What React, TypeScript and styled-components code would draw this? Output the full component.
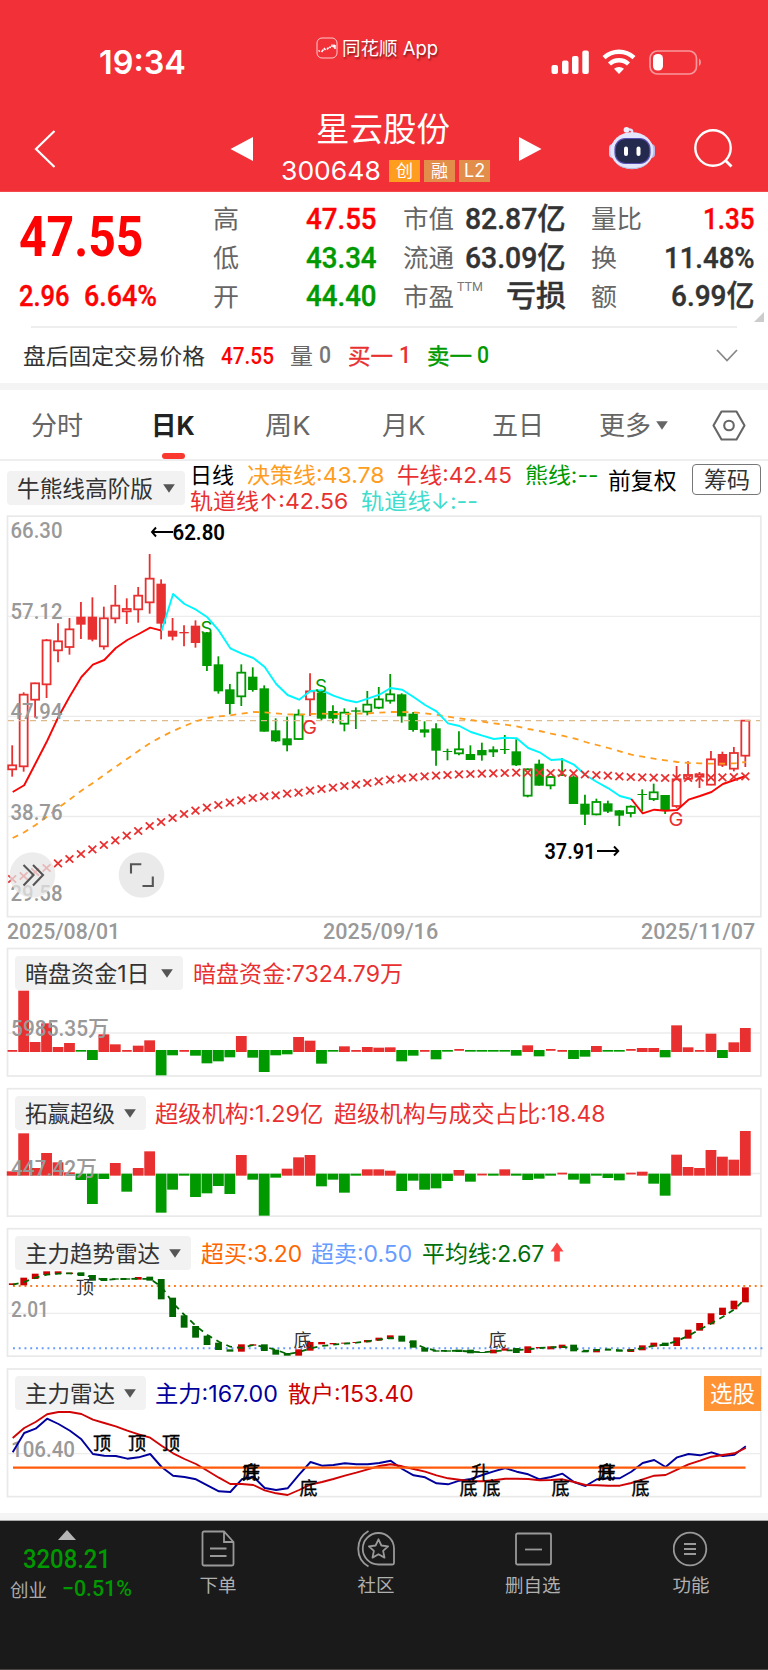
import React, { useLayoutEffect, useRef } from 'react';
import styled, { createGlobalStyle, css } from 'styled-components';

const RED = '#e93030';
const GREEN = '#009900';
const CJK = '"Noto Sans CJK SC", sans-serif';

const GlobalStyle = createGlobalStyle`
  body { margin: 0; background: #fff; }
  * { box-sizing: border-box; }
  svg { display: block; flex: none; }
`;

const Page = styled.div`
  width: 768px;
  height: 1670px;
  overflow: hidden;
  display: flex;
  flex-direction: column;
  background: #fff;
  font-family: Inter, ${CJK};
`;

/* ---------- text ---------- */

type LabelProps = {
  $w: number; $size: number; $color?: string; $weight?: number; $num?: boolean; $ml?: number; $mt?: number; $shadow?: boolean; $strong?: boolean;
};
const LabelBox = styled.span<LabelProps>`
  display: block;
  flex: none;
  width: ${p => p.$w}px;
  height: ${p => Math.round(p.$size * 1.2)}px;
  line-height: ${p => Math.round(p.$size * 1.2)}px;
  margin-left: ${p => p.$ml || 0}px;
  margin-top: ${p => p.$mt || 0}px;
  font-size: ${p => p.$size}px;
  font-weight: ${p => p.$weight || 400};
  color: ${p => p.$color || '#333'};
  font-family: ${p => (p.$num ? 'Roboto' : 'Inter')}, ${CJK};
  white-space: nowrap;
  ${p => p.$strong && css`-webkit-text-stroke: 0.4px currentColor;`}
  ${p => p.$shadow && css`text-shadow: 1px 2px 2px rgba(0, 0, 0, 0.45);`}
`;
const LabelInner = styled.span`
  display: inline-block;
  transform-origin: 0 50%;
  white-space: pre;
`;

type TextProps = {
  w: number; size: number; color?: string; weight?: number; num?: boolean; ml?: number; mt?: number; shadow?: boolean; strong?: boolean;
  children: React.ReactNode;
};

/* Text condensed or widened to a fixed advance width. */
function Text({ w, size, color, weight, num, ml, mt, shadow, strong, children }: TextProps) {
  const ref = useRef<HTMLSpanElement>(null);
  useLayoutEffect(() => {
    const el = ref.current;
    if (el && el.offsetWidth) el.style.transform = `scaleX(${w / el.offsetWidth})`;
  }, [w, children]);
  return (
    <LabelBox $w={w} $size={size} $color={color} $weight={weight} $num={num} $ml={ml} $mt={mt} $shadow={shadow} $strong={strong}>
      <LabelInner ref={ref}>{children}</LabelInner>
    </LabelBox>
  );
}

/* ---------- header ---------- */

const Header = styled.header`
  height: 192px;
  flex: none;
  background: #f23038;
  border-bottom: 1px solid #f4474e;
`;
const StatusBar = styled.div`
  height: 96px;
  display: flex;
  align-items: flex-start;
  padding-left: 99px;
`;
const AppTag = styled.div`
  display: flex;
  align-items: center;
  gap: 4px;
  margin: 37px 0 0 130px;
`;
const StatusIcons = styled.div`
  display: flex;
  align-items: center;
  margin: 48px 0 0 112px;
`;
const TitleBar = styled.div`
  height: 95px;
  display: flex;
  align-items: flex-start;
`;
const TitleBlock = styled.div`
  width: 210px;
  margin-left: 27px;
  display: flex;
  flex-direction: column;
`;
const CodeRow = styled.div`
  display: flex;
  align-items: center;
  margin-top: 6px;
`;
const Badges = styled.div`
  display: flex;
  gap: 4px;
  margin-left: 8px;
`;
const Badge = styled.span<{ $bg: string }>`
  width: 31px;
  height: 22px;
  background: ${p => p.$bg};
  display: flex;
  align-items: center;
  justify-content: center;
`;
const IconSlot = styled.div<{ $ml: number; $mt: number }>`
  flex: none;
  margin: ${p => p.$mt}px 0 0 ${p => p.$ml}px;
`;

/* ---------- quote ---------- */

const Quote = styled.section`
  height: 134px;
  flex: none;
  display: grid;
  grid-template-columns: 213px 190px 188px 177px;
  position: relative;
`;
const PriceCol = styled.div`
  padding: 15px 0 0 19px;
`;
const ChangeRow = styled.div`
  display: flex;
  margin-top: 8px;
`;
const StatCol = styled.div<{ $pr: number }>`
  display: grid;
  grid-template-rows: 39px 39px 38px;
  padding: 7px ${p => p.$pr}px 0 0;
`;
const StatRow = styled.div`
  display: flex;
  align-items: center;
`;
const Spacer = styled.div`
  flex: 1;
`;
const Corner = styled.svg`
  position: absolute;
  right: 4px;
  bottom: 4px;
`;
const Divider = styled.div`
  height: 2px;
  flex: none;
  margin: 0 31px;
  background: #eee;
`;
const AfterHours = styled.section`
  height: 55px;
  flex: none;
  display: flex;
  align-items: center;
  padding-left: 23px;
  padding-top: 1px;
`;
const Band = styled.div<{ $h: number }>`
  height: ${p => p.$h}px;
  flex: none;
  background: #f4f4f4;
`;

/* ---------- tabs ---------- */

const Tabs = styled.nav`
  height: 71px;
  flex: none;
  display: flex;
  border-bottom: 2px solid #eee;
  padding-left: 31px;
`;
const Tab = styled.div<{ $ml?: number }>`
  margin-left: ${p => p.$ml || 0}px;
  display: flex;
  flex-direction: column;
  align-items: center;
  padding-top: 20px;
`;
const Marker = styled.div`
  width: 23px;
  height: 6px;
  border-radius: 3px;
  background: #fb382f;
  margin-top: 12px;
`;
const MoreRow = styled.div`
  display: flex;
  align-items: center;
  gap: 5px;
`;

const IndicatorBar = styled.section`
  height: 52px;
  flex: none;
  display: flex;
  padding-left: 7px;
`;
const Pill = styled.div<{ $w: number; $mt?: number }>`
  width: ${p => p.$w}px;
  height: 34px;
  margin-top: ${p => p.$mt || 0}px;
  flex: none;
  border-radius: 4px;
  background: #f2f2f2;
  display: flex;
  align-items: center;
  justify-content: space-between;
  padding: 0 10px 0 10px;
`;
const Legends = styled.div`
  width: 418px;
  padding-top: 1px;
`;
const LegendRow = styled.div`
  display: flex;
`;
const Outlined = styled.div`
  width: 69px;
  height: 31px;
  margin: 3px 0 0 15px;
  border: 1.5px solid #777;
  border-radius: 4px;
  display: flex;
  align-items: center;
  justify-content: center;
`;
const AxisRow = styled.div`
  height: 27px;
  flex: none;
  display: flex;
  justify-content: space-between;
  padding: 0 13px 0 7px;
`;

/* ---------- sub charts ---------- */

const Panel = styled.section`
  height: 140px;
  flex: none;
  display: grid;
  & > * { grid-area: 1 / 1; }
`;
const PanelHead = styled.div`
  display: flex;
  align-items: center;
  height: 34px;
  margin: 10px 7px 0 15px;
  z-index: 1;
`;
const PickBtn = styled.div`
  width: 57px;
  height: 35px;
  background: #ff9232;
  display: flex;
  align-items: center;
  justify-content: center;
`;

/* ---------- bottom nav ---------- */

const BottomGap = styled.div`
  height: 7px;
  flex: none;
`;
const BottomBar = styled.footer`
  height: 150px;
  flex: none;
  background: #1a1a1a;
  border-top: 1px solid #a9abab;
  border-bottom: 1px solid #4b4545;
  display: flex;
`;
const IndexBox = styled.div`
  width: 140px;
  padding-top: 9px;
`;
const IndexRow = styled.div`
  display: flex;
  align-items: center;
  padding-left: 10px;
`;
const NavItem = styled.div<{ $ml: number }>`
  width: 60px;
  margin-left: ${p => p.$ml}px;
  padding-top: 8px;
  display: flex;
  flex-direction: column;
  align-items: center;
`;

const Caret = ({ color = '#555' }: { color?: string }) => (
  <svg width={12} height={9} viewBox="0 0 12 9"><path d="M0.2 0.3H11.8L6 8.8Z" fill={color} /></svg>
);

/* ---------- chart data ---------- */

const X0 = 12.2;
const STEP = 11.455;
const cx = (i: number) => X0 + STEP * i;

/* h: hollow red, r: solid red, g: solid green, e: hollow green */
type Kind = 'h' | 'r' | 'g' | 'e';
type Candle = [Kind, number, number, number, number];
const third = (base: number, rows: Candle[]): Candle[] =>
  rows.map(([k, a, b, c, d]) => [k, base + a / 3, base + b / 3, base + c / 3, base + d / 3]);
const seg = (base: number, ys: number[]) => ys.map(v => base + v / 3);

const candles: Candle[] = [
  ...third(510, [
    ['h', 706, 766, 778, 800], ['h', 547, 554, 769, 785], ['h', 518, 520, 569, 623], ['h', 387, 391, 523, 564],
    ['h', 340, 394, 421, 457], ['h', 324, 358, 411, 434], ['r', 276, 320, 344, 387], ['r', 262, 320, 389, 394],
    ['h', 290, 325, 409, 419], ['h', 225, 287, 325, 340], ['h', 265, 297, 304, 342], ['h', 231, 257, 298, 338],
    ['h', 132, 206, 277, 311], ['r', 208, 221, 341, 388], ['r', 324, 362, 380, 391], ['r', 346, 366, 370, 409],
    ['r', 331, 347, 399, 413], ['g', 366, 367, 468, 483], ['g', 439, 463, 544, 551], ['g', 522, 538, 582, 613],
    ['e', 463, 488, 559, 588], ['g', 472, 500, 540, 545],
  ]),
  ...third(560, [
    ['g', 376, 385, 515, 515], ['g', 475, 511, 544, 546], ['g', 470, 535, 556, 574], ['e', 448, 464, 537, 540],
    ['h', 340, 394, 418, 468], ['g', 390, 398, 476, 481], ['g', 436, 453, 476, 490], ['e', 445, 458, 491, 514],
    ['g', 442, 451, 455, 507], ['e', 393, 434, 455, 466], ['e', 381, 418, 443, 447], ['e', 342, 403, 422, 431],
    ['g', 400, 403, 469, 488], ['g', 456, 461, 510, 515], ['g', 484, 508, 518, 532], ['g', 490, 505, 572, 617],
    ['g', 566, 573, 576, 601], ['e', 514, 568, 580, 586], ['g', 556, 582, 600, 600],
  ]),
  ...third(660, [
    ['g', 248, 270, 286, 302], ['g', 259, 268, 277, 291], ['g', 225, 267, 270, 282], ['g', 238, 274, 316, 318],
    ['e', 325, 328, 407, 412], ['g', 299, 311, 377, 377], ['e', 348, 351, 376, 388], ['g', 294, 344, 347, 348],
    ['g', 346, 350, 432, 432], ['g', 404, 431, 464, 495], ['e', 416, 426, 463, 466], ['g', 422, 430, 455, 459],
    ['g', 450, 451, 467, 498], ['e', 436, 440, 459, 472], ['g', 388, 402, 405, 454], ['e', 371, 397, 417, 423],
    ['g', 405, 405, 451, 462], ['h', 318, 358, 438, 445], ['h', 304, 345, 356, 360], ['h', 336, 343, 350, 384],
    ['h', 273, 298, 374, 376], ['r', 275, 282, 317, 321], ['h', 261, 279, 326, 334], ['h', 180, 182, 287, 321],
  ]),
];

const bullA = seg(510, [846, 826, 760, 693, 620, 558, 501, 464, 450, 414, 390, 372, 353, 362]);
const bear = [
  ...seg(510, [362, 252, 282, 299]),
  ...seg(560, [172, 212, 265, 281, 294, 321, 372, 405, 419, 393, 391, 407, 419, 427, 416, 404, 384, 389, 411, 435, 454, 490, 498, 516]),
  ...seg(660, [227, 237, 233, 235, 264, 277, 300, 298, 314, 345, 366, 385, 408, 417]),
];
const bullB = seg(660, [417, 460, 449, 452, 450, 419, 408, 396, 372, 360, 348]);
const decision = [
  ...seg(510, [984, 967, 945, 920, 893, 868, 842, 819, 794, 770, 746, 722, 699, 680, 663, 648, 634, 624, 619, 616, 611, 606]),
  ...seg(560, [457, 460, 463, 464, 462, 461, 462, 462, 461, 460, 458, 456, 456, 457, 460, 464, 470, 475, 480]),
  ...seg(660, [185, 190, 194, 199, 207, 213, 221, 227, 235, 246, 255, 264, 274, 284, 290, 296, 301, 306, 309, 310, 311, 311, 310, 306]),
];
const crosses = [
  ...seg(510, [1107, 1098, 1086, 1074, 1060, 1047, 1032, 1018, 1005, 991, 977, 963, 948, 936, 924, 912, 902, 893, 885, 878, 871, 864]),
  ...seg(560, [709, 706, 701, 698, 692, 687, 683, 678, 674, 669, 664, 659, 655, 652, 649, 647, 645, 643, 642]),
  ...seg(660, [341, 340, 339, 338, 338, 338, 339, 339, 340, 343, 345, 347, 349, 351, 352, 353, 354, 354, 354, 353, 353, 352, 351, 349]),
];

/* Bars: positive = bar top above the zero line, negative = bar bottom below it; -1 and -2 are near-zero dashes. */
const funds = [
  -1, 152, 306, 250, 321, 309, -335, -360, 283, 313, -1, 317, 301, -406, -346, -1, -347, -370, -364, -352, 288, -353, -396, -346, -343,
  291, 302, -371, -335, 319, -1, 321, 323, 322, -364, -347, -1, -358, -335, -2, -335, -335, -335, -335, -347, 316, -349, -2, -1, -357,
  -350, 318, -335, -335, -2, 324, 324, -352, 256, 322, -1, 281, -354, 307, 264,
];
const orgs = [
  694, 580, 684, 639, 667, 697, -720, -792, -717, 669, -755, 684, 634, -818, -749, -707, -771, -760, -738, -762, 645, -719, -827, -713,
  686, 652, 645, -739, -719, -758, -707, 688, 688, 692, -753, -722, -749, -745, -723, 690, -725, -1, -707, 688, -707, -720, -716, -707,
  -2, -719, -731, -707, -714, -721, -2, 695, -731, -767, 644, 681, 684, 630, 650, 659, 573,
];

const radarBoxes = 'r190-195 r173-196 r161-177 r154-165 r154-162 r158-162 g157-168 g165-182 g174-183 g175-179 g175-179 r171-179 g170-182 g177-238 g233-291 g286-323 g318-353 g347-375 g368-390 g388-395 r373-395 r373-377 g373-393 g389-404 g399-407 r388-407 r366-392 r366-373 r369-373 r368-371 r366-369 r360-367 r353-362 r346-357 g347-365 g361-383 g383-395 g391-395 g391-395 g389-396 g389-400 g396-399 r389-400 r385-392 g384-399 r379-399 r381-385 r379-388 r374-384 g374-394 g392-397 r387-397 g389-391 g389-395 r387-396 r376-391 r368-380 g368-378 r352-378 r329-356 r309-332 r280-313 r263-285 r242-268 r202-247'
  .split(' ')
  .map(s => {
    const [a, b] = s.slice(1).split('-').map(Number);
    return { red: s[0] === 'r', top: 1220 + a / 3, h: (b - a) / 3 };
  });
const radarAvg = seg(1220, [
  194, 186, 173, 164, 161, 160, 163, 172, 180, 177, 177, 176, 177, 200, 250, 285, 318, 345, 365, 380, 384, 375, 380, 390, 402, 396, 385,
  378, 374, 371, 368, 364, 359, 354, 358, 370, 384, 392, 393, 392, 395, 397, 394, 391, 391, 388, 384, 382, 380, 385, 393, 390, 388, 391,
  391, 384, 377, 374, 363, 347, 328, 310, 290, 268, 235,
]);
const mainForce = seg(1220, [
  697, 639, 626, 596, 612, 632, 658, 702, 707, 708, 716, 712, 702, 741, 767, 771, 778, 796, 814, 816, 778, 770, 804, 810, 805, 764, 726,
  737, 735, 730, 733, 733, 729, 722, 747, 766, 772, 790, 793, 782, 777, 765, 754, 744, 755, 763, 778, 771, 761, 786, 798, 778, 775, 775,
  755, 729, 720, 741, 712, 702, 706, 697, 708, 704, 679,
]);
const retail = seg(1220, [
  654, 624, 606, 583, 576, 576, 582, 599, 609, 619, 632, 643, 653, 677, 700, 717, 732, 752, 773, 792, 792, 795, 811, 820, 825, 810, 794,
  786, 777, 767, 758, 748, 738, 733, 739, 747, 755, 766, 775, 779, 784, 784, 781, 776, 776, 777, 781, 780, 778, 786, 795, 796, 797, 797,
  789, 778, 767, 765, 749, 733, 722, 710, 705, 700, 684,
]);

const pts = (ys: number[], from = 0) => ys.map((y, i) => `${(cx(i + from) + 0.5).toFixed(1)},${y.toFixed(1)}`).join(' ');

/* ---------- chart pieces ---------- */

type SvgTextProps = { x: number; y: number; w: number; size?: number; color?: string; weight?: number; family?: string; children: string };
const SvgText = ({ x, y, w, size = 22, color = '#999', weight = 500, family = 'Roboto', children }: SvgTextProps) => (
  <text x={x} y={y} fontSize={size} fill={color} fontWeight={weight} fontFamily={`${family}, "Noto Sans CJK SC", sans-serif`}
    textLength={w} lengthAdjust="spacingAndGlyphs">{children}</text>
);

const Line = ({ ys, from = 0, color, dash, width = 1.9 }: { ys: number[]; from?: number; color: string; dash?: string; width?: number }) => (
  <polyline points={pts(ys, from)} fill="none" stroke={color} strokeWidth={width} strokeDasharray={dash} strokeLinejoin="round" />
);

const Frame = ({ top, bottom, grid }: { top: number; bottom: number; grid: number[] }) => (
  <g>
    <rect x={7.5} y={top} width={753.3} height={bottom - top} fill="none" stroke="#e9e9e9" strokeWidth={1.7} />
    {grid.map(y => <line key={y} x1={8} x2={760} y1={y} y2={y} stroke="#ececec" strokeWidth={1.3} />)}
  </g>
);

function MainChart() {
  return (
    <svg width={768} height={406} viewBox="0 513 768 406">
      <Frame top={516.2} bottom={916.7} grid={[616.4, 716.4, 816.5]} />
      <SvgText x={10.5} y={538} w={52}>66.30</SvgText>
      {candles.map(([k, hi, top, bot, lo], i) => {
        const color = k === 'h' || k === 'r' ? RED : GREEN;
        const hollow = k === 'h' || k === 'e';
        return (
          <g key={i} stroke={color}>
            <line x1={cx(i)} x2={cx(i)} y1={hi} y2={hollow ? top : lo} strokeWidth={1.8} />
            {hollow && <line x1={cx(i)} x2={cx(i)} y1={bot} y2={lo} strokeWidth={1.8} />}
            {hollow
              ? <rect x={cx(i) - 4} y={top} width={8} height={bot - top} fill="none" strokeWidth={1.8} />
              : <rect x={cx(i) - 4.7} y={top} width={9.4} height={Math.max(bot - top, 1)} fill={color} stroke="none" />}
          </g>
        );
      })}
      <line x1={8} x2={760} y1={720.7} y2={720.7} stroke="#deba8a" strokeWidth={1.3} strokeDasharray="6 5" />
      <Line ys={decision} color="#ff9d1e" dash="6 5.5" width={1.8} />
      <Line ys={bullA} color="#f80505" />
      <Line ys={bear} from={13} color="#00f6ff" />
      <Line ys={bullB} from={54} color="#f80505" />
      {crosses.map((y, i) => (
        <path key={i} d={`M${cx(i) - 3.9} ${y - 3.7}l7.8 7.4m0 -7.4l-7.8 7.4`} stroke={RED} strokeWidth={1.8} />
      ))}
      <SvgText x={200.5} y={635} w={12} size={18} color={GREEN} weight={400} family="Inter">S</SvgText>
      <SvgText x={315} y={693} w={12} size={18} color={GREEN} weight={400} family="Inter">S</SvgText>
      <SvgText x={302} y={734} w={15} size={19} color={RED} weight={400} family="Inter">G</SvgText>
      <SvgText x={668.5} y={826} w={15} size={19} color={RED} weight={400} family="Inter">G</SvgText>
      <SvgText x={10.5} y={619} w={52}>57.12</SvgText>
      <SvgText x={10.5} y={719} w={52}>47.94</SvgText>
      <SvgText x={10.5} y={819.5} w={52}>38.76</SvgText>
      <SvgText x={10.5} y={901} w={52}>29.58</SvgText>
      <path d="M156 527.5l-4 4.5 4 4.5M152 532H173" fill="none" stroke="#000" strokeWidth={1.9} />
      <SvgText x={172.5} y={540.2} w={52.5} color="#000" weight={600}>62.80</SvgText>
      <SvgText x={544.5} y={859.3} w={51} color="#000" weight={600}>37.91</SvgText>
      <path d="M597 851H618M614 846.5l4.3 4.5-4.3 4.5" fill="none" stroke="#000" strokeWidth={1.9} />
      <circle cx={32.5} cy={875} r={22.8} fill="#e6e6e6" fillOpacity={0.75} />
      <path d="M23.5 865l10 10-10 10.5M33 865l10 10-10 10.5" fill="none" stroke="#555" strokeWidth={2.1} />
      <circle cx={141.5} cy={875} r={22.8} fill="#e6e6e6" fillOpacity={0.85} />
      <path d="M131 873.5v-9.3h10.3M142.5 886h10.3v-9.6" fill="none" stroke="#555" strokeWidth={2.1} />
    </svg>
  );
}

function BarChart({ values, top, zero }: { values: number[]; top: number; zero: number }) {
  return (
    <g>
      {values.map((v, i) => {
        const x = cx(i) - 5.4;
        if (v === -1) return <rect key={i} x={x + 0.8} y={top + zero / 3 - 1} width={9.6} height={1.8} fill={RED} />;
        if (v === -2) return <rect key={i} x={x + 0.8} y={top + zero / 3 - 2} width={9.6} height={1.8} fill={RED} />;
        if (v > 0) return <rect key={i} x={x} y={top + v / 3} width={10.8} height={(zero + 3 - v) / 3} fill={RED} />;
        return <rect key={i} x={x} y={top + (zero - 3) / 3} width={10.8} height={(-v - zero + 3) / 3} fill={GREEN} />;
      })}
    </g>
  );
}

const Signal = ({ x, y, bold, children }: { x: number; y: number; bold?: boolean; children: string }) => (
  <text x={x} y={y} fontSize={18} fill={bold ? '#000' : '#333'} stroke={bold ? '#000' : 'none'} strokeWidth={0.4}
    fontFamily='"Noto Sans CJK SC", sans-serif'>{children}</text>
);

/* ---------- icons ---------- */

const Robot = () => (
  <svg width={48} height={46} viewBox="608 125 48 46">
    <path d="M631.5 134c2-4-1-5-4-4.5" fill="none" stroke="#dfe2ff" strokeWidth={2.4} />
    <circle cx={626.500} cy={129.8} r={2.9} fill="#eef0ff" />
    <rect x={609} y={144} width={8} height={14} rx={4} fill="#c9cbf2" />
    <rect x={647} y={144} width={8} height={14} rx={4} fill="#b9b6e8" />
    <ellipse cx={632} cy={150.7} rx={21.5} ry={18.5} fill="#e3e6fb" />
    <path d="M615 162c8 8 26 8 34 0-4 5-10 7-17 7s-13-2-17-7z" fill="#b5bbe0" />
    <rect x={615} y={138.5} width={35} height={25} rx={10.5} fill="#232a4d" stroke="#5b50b8" strokeWidth={1.2} />
    <rect x={624} y={146.5} width={4} height={9.5} rx={2} fill="#fff" />
    <rect x={636.5} y={146.5} width={4} height={9.5} rx={2} fill="#fff" />
  </svg>
);

const Stat = ({ label, lw, value, vw, color, children }: { label: string; lw: number; value: string; vw: number; color?: string; children?: React.ReactNode }) => (
  <StatRow>
    <Text w={lw} size={25} color="#666" mt={1}>{label}</Text>
    {children}
    <Spacer />
    <Text w={vw} size={30} color={color} weight={500} num strong>{value}</Text>
  </StatRow>
);

export default function App() {
  return (
    <Page>
      <GlobalStyle />
      <Header>
        <StatusBar>
          <Text w={87} size={32} weight={600} color="#fff" mt={44}>19:34</Text>
          <AppTag>
            <svg width={22} height={22} viewBox="0 0 22 22">
              <rect x={1} y={1} width={20} height={20} rx={5} fill="none" stroke="#fff" strokeOpacity={0.75} />
              <path d="M2.5 13.5l1.5 1M5.5 15l2-2.5M8 11l1.5 2M11 12.5l1.5-2M13.5 9.5l1 1.5M16 10V7.5M17.5 10.5l.5-3M19 12v-4" stroke="#fff" strokeWidth={1.5} fill="none" />
            </svg>
            <Text w={96} size={18.5} color="#fff" shadow>同花顺 App</Text>
          </AppTag>
          <StatusIcons>
            <svg width={152} height={28} viewBox="549 48 152 28">
              <g fill="#fff">
                <rect x={550.5} y={65} width={6.5} height={9} rx={2} />
                <rect x={561} y={60.5} width={6.5} height={13.5} rx={2} />
                <rect x={571} y={56} width={6.5} height={18} rx={2} />
                <rect x={581.3} y={50.5} width={6.5} height={23.5} rx={2} />
                <path d="M618 74l-5-5.2a7.5 7.5 0 0 1 10 0z" />
              </g>
              <path d="M603 57.7a22 22 0 0 1 30 0M608.5 64a13.8 13.8 0 0 1 19 0" stroke="#fff" strokeWidth={4.4} fill="none" />
              <rect x={649} y={51} width={46.5} height={23} rx={7.5} fill="none" stroke="#fff" strokeOpacity={0.5} strokeWidth={1.7} />
              <rect x={652} y={54} width={10} height={16.5} rx={4.5} fill="#fff" />
              <path d="M698 58.5c2.5 1.5 2.5 6 0 7.5z" fill="#fff" fillOpacity={0.55} />
            </svg>
          </StatusIcons>
        </StatusBar>
        <TitleBar>
          <IconSlot $ml={34} $mt={33}>
            <svg width={23} height={40} viewBox="0 0 23 40"><path d="M20.5 2L2 20l18.5 18" fill="none" stroke="#fff" strokeWidth={2.2} /></svg>
          </IconSlot>
          <IconSlot $ml={173} $mt={40}>
            <svg width={24} height={26} viewBox="0 0 24 26"><path d="M0.500 13L23 1V25Z" fill="#fff" /></svg>
          </IconSlot>
          <TitleBlock>
            <Text w={134} size={33} color="#fff" ml={35} mt={13}>星云股份</Text>
            <CodeRow>
              <Text w={100} size={26} color="#fff">300648</Text>
              <Badges>
                <Badge $bg="#ff9d1e"><Text w={17} size={17} color="#fff">创</Text></Badge>
                <Badge $bg="#e28d49"><Text w={17} size={17} color="#fff">融</Text></Badge>
                <Badge $bg="#e28d49"><Text w={21} size={18} color="#fff">L2</Text></Badge>
              </Badges>
            </CodeRow>
          </TitleBlock>
          <IconSlot $ml={27} $mt={40}>
            <svg width={24} height={26} viewBox="0 0 24 26"><path d="M23.500 13L1 1V25Z" fill="#fff" /></svg>
          </IconSlot>
          <IconSlot $ml={66} $mt={29}><Robot /></IconSlot>
          <IconSlot $ml={36} $mt={32}>
            <svg width={42} height={42} viewBox="0 0 42 42">
              <circle cx={21} cy={20} r={17.7} fill="none" stroke="#fff" strokeWidth={2.4} />
              <path d="M33.5 32.500l6 6" stroke="#fff" strokeWidth={2.8} />
            </svg>
          </IconSlot>
        </TitleBar>
      </Header>

      <Quote>
        <PriceCol>
          <Text w={124} size={55.5} weight={700} num color="#fc0202" mt={-3}>47.55</Text>
          <ChangeRow>
            <Text w={51} size={29} weight={500} num strong color="#fc0202">2.96</Text>
            <Text w={73} size={29} weight={500} num strong color="#fc0202" ml={14}>6.64%</Text>
          </ChangeRow>
        </PriceCol>
        <StatCol $pr={26}>
          <Stat label="高" lw={26} value="47.55" vw={71} color="#fc0202" />
          <Stat label="低" lw={26} value="43.34" vw={71} color={GREEN} />
          <Stat label="开" lw={26} value="44.40" vw={71} color={GREEN} />
        </StatCol>
        <StatCol $pr={25}>
          <Stat label="市值" lw={51} value="82.87亿" vw={101} />
          <Stat label="流通" lw={51} value="63.09亿" vw={101} />
          <Stat label="市盈" lw={51} value="亏损" vw={60}>
            <Text w={26} size={12.5} color="#777" num ml={3} mt={-20}>TTM</Text>
          </Stat>
        </StatCol>
        <StatCol $pr={13}>
          <Stat label="量比" lw={51} value="1.35" vw={52} color="#fc0202" />
          <Stat label="换" lw={26} value="11.48%" vw={91} />
          <Stat label="额" lw={26} value="6.99亿" vw={84} />
        </StatCol>
        <Corner width={10} height={10} viewBox="0 0 10 10"><path d="M10 0V10H0Z" fill="#ccc" /></Corner>
      </Quote>
      <Divider />
      <AfterHours>
        <Text w={182} size={22} >盘后固定交易价格</Text>
        <Text w={53} size={23.5} weight={500} num color="#fc0202" ml={16}>47.55</Text>
        <Text w={23} size={22} color="#666" ml={16}>量</Text>
        <Text w={12} size={23} num color="#777" ml={6} weight={500}>0</Text>
        <Text w={45} size={22} color={RED} strong ml={17}>买一</Text>
        <Text w={12} size={23} num color={RED} ml={6} weight={500}>1</Text>
        <Text w={45} size={22} color={GREEN} strong ml={16}>卖一</Text>
        <Text w={12} size={23} num color={GREEN} ml={5} weight={500}>0</Text>
        <IconSlot $ml={227} $mt={0}>
          <svg width={22} height={14} viewBox="0 0 22 14"><path d="M1 1L11 11.5 21 1" fill="none" stroke="#888" strokeWidth={1.8} /></svg>
        </IconSlot>
      </AfterHours>
      <Band $h={7} />

      <Tabs>
        <Tab><Text w={52} size={26} color="#666">分时</Text></Tab>
        <Tab $ml={68}><Text w={44} size={26} color="#222" weight={700}>日K</Text><Marker /></Tab>
        <Tab $ml={70}><Text w={45} size={26} color="#666">周K</Text></Tab>
        <Tab $ml={72}><Text w={43} size={26} color="#666">月K</Text></Tab>
        <Tab $ml={67}><Text w={52} size={26} color="#666">五日</Text></Tab>
        <Tab $ml={55}>
          <MoreRow><Text w={52} size={26} color="#666">更多</Text><Caret color="#666" /></MoreRow>
        </Tab>
        <IconSlot $ml={44} $mt={20}>
          <svg width={34} height={31} viewBox="0 0 34 31">
            <path d="M9.5 1.5H24.5L32.5 15.5 24.5 29.5H9.5L1.5 15.5Z" fill="none" stroke="#666" strokeWidth={2.1} strokeLinejoin="round" />
            <circle cx={17} cy={15.5} r={4.8} fill="none" stroke="#666" strokeWidth={2.1} />
          </svg>
        </IconSlot>
      </Tabs>

      <IndicatorBar>
        <Pill $w={178} $mt={10}><Text w={136} size={22.5}>牛熊线高阶版</Text><Caret /></Pill>
        <Legends>
          <LegendRow>
            <Text w={44} size={22} color="#000" ml={5}>日线</Text>
            <Text w={137} size={22} color="#ff9d1e" ml={13}>决策线:43.78</Text>
            <Text w={115} size={22} color={RED} ml={13}>牛线:42.45</Text>
            <Text w={74} size={22} color={GREEN} ml={13}>熊线:--</Text>
          </LegendRow>
          <LegendRow>
            <Text w={158} size={22} color={RED} ml={5}>轨道线↑:42.56</Text>
            <Text w={117} size={22} color="#40dccd" ml={13}>轨道线↓:--</Text>
          </LegendRow>
        </Legends>
        <Text w={69} size={22.5} color="#000" ml={5} mt={6}>前复权</Text>
        <Outlined><Text w={46} size={22.5}>筹码</Text></Outlined>
      </IndicatorBar>

      <MainChart />
      <AxisRow>
        <Text w={113} size={22} num color="#999" weight={500}>2025/08/01</Text>
        <Text w={115} size={22} num color="#999" weight={500}>2025/09/16</Text>
        <Text w={114} size={22} num color="#999" weight={500}>2025/11/07</Text>
      </AxisRow>

      <Panel>
        <svg width={768} height={140} viewBox="0 946 768 140">
          <Frame top={948.5} bottom={1076} grid={[1033]} />
          <BarChart values={funds} top={940} zero={333} />
          <SvgText x={11} y={1036} w={98}>5985.35万</SvgText>
        </svg>
        <PanelHead>
          <Pill $w={168}><Text w={125} size={22.5}>暗盘资金1日</Text><Caret /></Pill>
          <Text w={210} size={22.5} color={RED} ml={10}>暗盘资金:7324.79万</Text>
        </PanelHead>
      </Panel>

      <Panel>
        <svg width={768} height={140} viewBox="0 1086 768 140">
          <Frame top={1088.7} bottom={1216.2} grid={[1173.5]} />
          <BarChart values={orgs} top={940} zero={704} />
          <SvgText x={11} y={1176.3} w={86}>447.42万</SvgText>
        </svg>
        <PanelHead>
          <Pill $w={131}><Text w={90} size={22.5}>拓赢超级</Text><Caret /></Pill>
          <Text w={168} size={22.5} color={RED} ml={9}>超级机构:1.29亿</Text>
          <Text w={272} size={22.5} color={RED} ml={11}>超级机构与成交占比:18.48</Text>
        </PanelHead>
      </Panel>

      <Panel>
        <svg width={768} height={140} viewBox="0 1226 768 140">
          <Frame top={1228.7} bottom={1356.2} grid={[1313.3]} />
          <SvgText x={11} y={1316.5} w={38}>2.01</SvgText>
          <line x1={13} x2={766} y1={1286} y2={1286} stroke="#ff7a1a" strokeWidth={1.9} strokeDasharray="1.9 3.85" />
          <line x1={13} x2={766} y1={1348.2} y2={1348.2} stroke="#669bff" strokeWidth={1.9} strokeDasharray="1.9 3.85" />
          {radarBoxes.map((b, i) => (
            <rect key={i} x={cx(i) - 3.3} y={b.top} width={6.8} height={b.h} fill={b.red ? '#cc0000' : '#006600'} />
          ))}
          <Line ys={radarAvg} color="#006600" dash="6 5" width={1.8} />
          <Signal x={76} y={1293.5}>顶</Signal>
          <Signal x={293.5} y={1347}>底</Signal>
          <Signal x={488.5} y={1347}>底</Signal>
        </svg>
        <PanelHead>
          <Pill $w={176}><Text w={135} size={22.5}>主力趋势雷达</Text><Caret /></Pill>
          <Text w={101} size={22.5} color="#ff6600" ml={10}>超买:3.20</Text>
          <Text w={101} size={22.5} color="#669bff" ml={9}>超卖:0.50</Text>
          <Text w={122} size={22.5} color="#006f0a" ml={10}>平均线:2.67</Text>
          <IconSlot $ml={6} $mt={-3}>
            <svg width={14} height={20} viewBox="0 0 14 20"><path d="M7 0.5L13.5 9.5H9.8V19.5H4.2V9.5H0.5Z" fill="#fb4444" /></svg>
          </IconSlot>
        </PanelHead>
      </Panel>

      <Panel>
        <svg width={768} height={140} viewBox="0 1366 768 140">
          <Frame top={1369} bottom={1496.6} grid={[1453.7]} />
          <SvgText x={11} y={1456.8} w={64}>106.40</SvgText>
          <Line ys={mainForce} color="#00009c" />
          <Line ys={retail} color="#d00404" />
          <line x1={13} x2={745.5} y1={1467.7} y2={1467.7} stroke="#ff5a0a" strokeWidth={2.2} />
          {[93, 128, 162].map(x => <Signal key={x} x={x} y={1449.5} bold>顶</Signal>)}
          <Signal x={242} y={1478.5} bold>升</Signal>
          <Signal x={242} y={1478.5} bold>底</Signal>
          <Signal x={471} y={1478.5} bold>升</Signal>
          <Signal x={597.5} y={1478.5} bold>升</Signal>
          <Signal x={597.5} y={1478.5} bold>底</Signal>
          {[299.5, 459.5, 482.5, 551.5, 631.5].map(x => <Signal key={x} x={x} y={1494.7} bold>底</Signal>)}
        </svg>
        <PanelHead>
          <Pill $w={131}><Text w={90} size={22.5}>主力雷达</Text><Caret /></Pill>
          <Text w={123} size={22.5} color="#00009c" ml={9}>主力:167.00</Text>
          <Text w={126} size={22.5} color="#cc0000" ml={10}>散户:153.40</Text>
          <Spacer />
          <PickBtn><Text w={45} size={22.5} color="#fff">选股</Text></PickBtn>
        </PanelHead>
      </Panel>

      <BottomGap />
      <Band $h={7} />
      <BottomBar>
        <IndexBox>
          <IconSlot $ml={58} $mt={0}>
            <svg width={18} height={10} viewBox="0 0 18 10"><path d="M9 0L18 10H0Z" fill="#b5b5b5" /></svg>
          </IconSlot>
          <Text w={88} size={26} num color={GREEN} weight={500} ml={23} mt={4}>3208.21</Text>
          <IndexRow>
            <Text w={37} size={18.5} color="#aaa" mt={2}>创业</Text>
            <Text w={70} size={22.5} num color={GREEN} weight={500} ml={15}>−0.51%</Text>
          </IndexRow>
        </IndexBox>
        <NavItem $ml={48}>
          <svg width={36} height={39} viewBox="0 0 36 39">
            <path d="M4 2.5H24L33.5 13V35a1.5 1.5 0 0 1-1.5 1.5H4A1.5 1.5 0 0 1 2.5 35V4A1.5 1.5 0 0 1 4 2.5ZM24 2.5V13H33.5M10 19.5H26.5M10 27H26.5" fill="none" stroke="#999" strokeWidth={1.8} />
          </svg>
          <Text w={37} size={18.5} color="#b0b0b0" mt={6}>下单</Text>
        </NavItem>
        <NavItem $ml={98}>
          <svg width={42} height={39} viewBox="0 0 42 39">
            <path d="M23.5 4a15.5 15.5 0 1 0 0 31.5H37.5a1.5 1.5 0 0 0 1.5-1.5V19.5A15.5 15.5 0 0 0 23.5 4Z" fill="none" stroke="#999" strokeWidth={1.8} />
            <path d="M13.5 2a20.5 20.5 0 0 0 0 35.5" fill="none" stroke="#999" strokeWidth={1.8} />
            <path d="M23.5 10.3l2.9 6.2 6.7.8-5 4.6 1.4 6.7-6-3.4-6 3.4 1.4-6.7-5-4.6 6.7-.8Z" fill="none" stroke="#999" strokeWidth={1.8} strokeLinejoin="round" />
          </svg>
          <Text w={37} size={18.5} color="#b0b0b0" mt={6}>社区</Text>
        </NavItem>
        <NavItem $ml={97}>
          <svg width={40} height={39} viewBox="0 0 40 39">
            <rect x={3} y={4.5} width={35} height={31} rx={1.5} fill="none" stroke="#999" strokeWidth={1.8} />
            <path d="M12 20.5H29" stroke="#999" strokeWidth={1.8} />
          </svg>
          <Text w={56} size={18.5} color="#b0b0b0" mt={6}>删自选</Text>
        </NavItem>
        <NavItem $ml={98}>
          <svg width={36} height={39} viewBox="0 0 36 39">
            <circle cx={17} cy={20} r={16.3} fill="none" stroke="#999" strokeWidth={1.8} />
            <path d="M11 15H23M11 20H23M11 25H23" stroke="#999" strokeWidth={1.8} />
          </svg>
          <Text w={37} size={18.5} color="#b0b0b0" mt={6}>功能</Text>
        </NavItem>
      </BottomBar>
    </Page>
  );
}
